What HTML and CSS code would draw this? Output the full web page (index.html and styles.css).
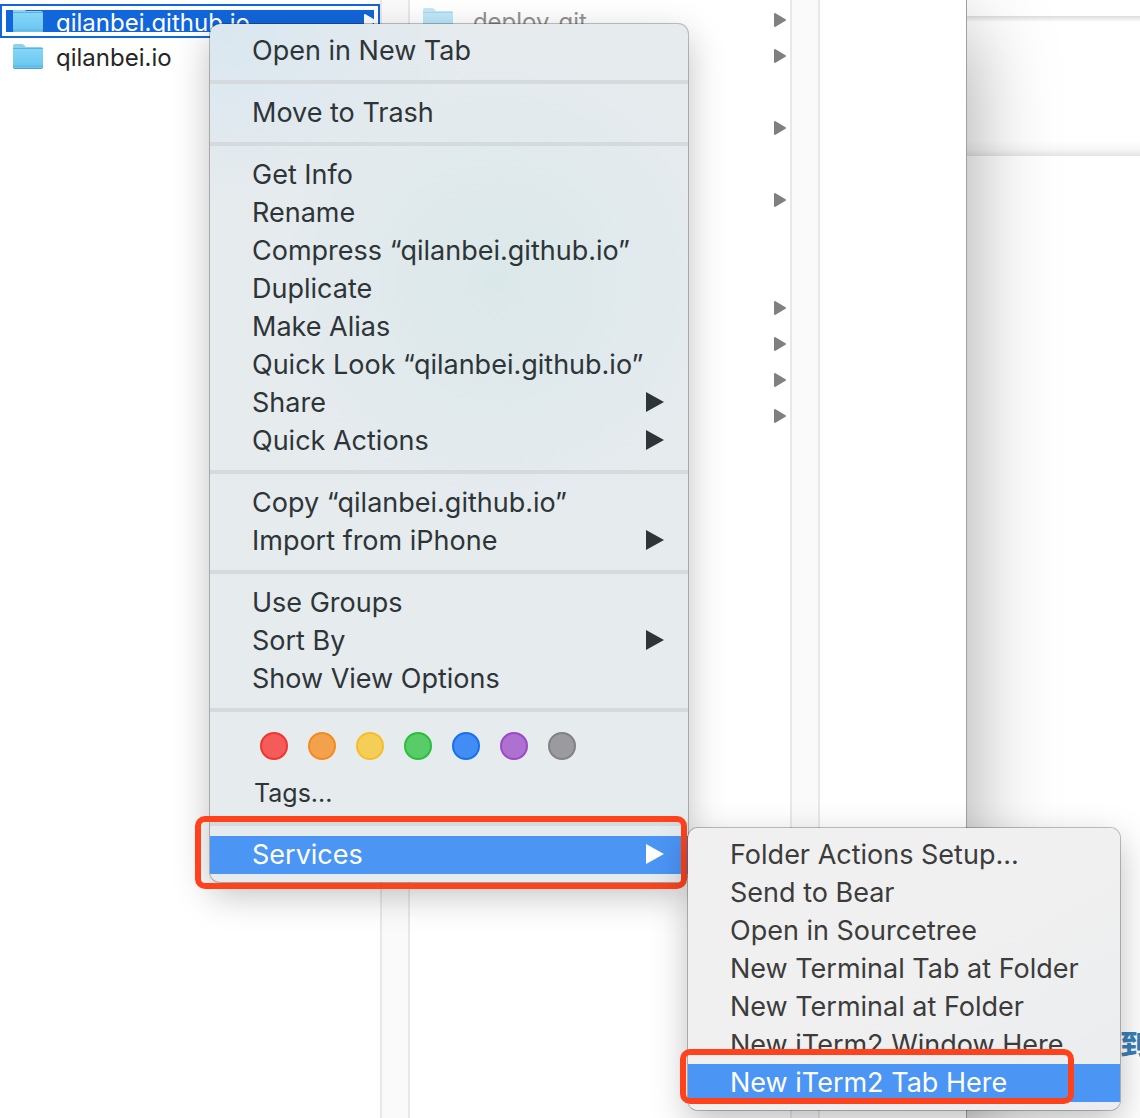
FILE: index.html
```html
<!DOCTYPE html>
<html lang="en">
<head>
<meta charset="utf-8">
<title>Finder</title>
<link rel="stylesheet" href="styles.css">
</head>
<body>
<svg class="defs" width="0" height="0" aria-hidden="true">
  <defs>
    <linearGradient id="front" x1="0" y1="0" x2="0" y2="1">
      <stop offset="0" stop-color="#85d6f8"/>
      <stop offset="1" stop-color="#69c5f0"/>
    </linearGradient>
    <symbol id="folder" viewBox="0 0 30 26">
      <path d="M0 2Q0 0 2 0H9Q10 0 11 1L13 3H28Q30 3 30 5V24H0Z" fill="#8fd0ea"/>
      <path d="M0 5H30V23Q30 25 28 25H2Q0 25 0 23Z" fill="#4ba5ca"/>
      <path d="M0 5H30V22Q30 24 28 24H2Q0 24 0 22Z" fill="url(#front)"/>
      <path d="M0 4.500H30M0 22H30" stroke="#5bb3dc"/>
    </symbol>
    <symbol id="disclosure" viewBox="0 0 12 14">
      <path d="M1 1V13L11 7Z" fill="currentColor" stroke="currentColor" stroke-width="2" stroke-linejoin="round"/>
    </symbol>
    <symbol id="submenu" viewBox="0 0 18 20">
      <path d="M0 0V20L18 10Z" fill="currentColor"/>
    </symbol>
  </defs>
</svg>

<main class="desktop">
  <section class="finder" aria-label="Finder columns">
    <div class="column">
      <button class="file file-selected">
        <span class="file-fill">
          <svg class="folder"><use href="#folder"/></svg>
          <span class="file-name">qilanbei.github.io</span>
          <svg class="disclosure"><use href="#disclosure"/></svg>
        </span>
      </button>
      <button class="file">
        <svg class="folder"><use href="#folder"/></svg>
        <span class="file-name">qilanbei.io</span>
      </button>
    </div>
    <div class="gutter"></div>
    <div class="column">
      <button class="file file-hidden">
        <svg class="folder"><use href="#folder"/></svg>
        <span class="file-name">.deploy_git</span>
        <svg class="disclosure"><use href="#disclosure"/></svg>
      </button>
      <div class="file"><svg class="disclosure"><use href="#disclosure"/></svg></div>
      <div class="file"></div>
      <div class="file"><svg class="disclosure"><use href="#disclosure"/></svg></div>
      <div class="file"></div>
      <div class="file"><svg class="disclosure"><use href="#disclosure"/></svg></div>
      <div class="file"></div>
      <div class="file"></div>
      <div class="file"><svg class="disclosure"><use href="#disclosure"/></svg></div>
      <div class="file"><svg class="disclosure"><use href="#disclosure"/></svg></div>
      <div class="file"><svg class="disclosure"><use href="#disclosure"/></svg></div>
      <div class="file"><svg class="disclosure"><use href="#disclosure"/></svg></div>
    </div>
    <div class="gutter"></div>
  </section>
  <section class="page" aria-label="Web page">
    <div class="page-bar"></div>
    <div class="page-panel"></div>
    <h2 class="page-heading">到</h2>
  </section>

  <div class="menu menu-context" role="menu">
    <button class="item" role="menuitem">Open in New Tab</button>
    <hr class="separator">
    <button class="item" role="menuitem">Move to Trash</button>
    <hr class="separator">
    <button class="item" role="menuitem">Get Info</button>
    <button class="item" role="menuitem">Rename</button>
    <button class="item" role="menuitem">Compress “qilanbei.github.io”</button>
    <button class="item" role="menuitem">Duplicate</button>
    <button class="item" role="menuitem">Make Alias</button>
    <button class="item" role="menuitem">Quick Look “qilanbei.github.io”</button>
    <button class="item" role="menuitem">Share<svg class="arrow"><use href="#submenu"/></svg></button>
    <button class="item" role="menuitem">Quick Actions<svg class="arrow"><use href="#submenu"/></svg></button>
    <hr class="separator">
    <button class="item" role="menuitem">Copy “qilanbei.github.io”</button>
    <button class="item" role="menuitem">Import from iPhone<svg class="arrow"><use href="#submenu"/></svg></button>
    <hr class="separator">
    <button class="item" role="menuitem">Use Groups</button>
    <button class="item" role="menuitem">Sort By<svg class="arrow"><use href="#submenu"/></svg></button>
    <button class="item" role="menuitem">Show View Options</button>
    <hr class="separator">
    <div class="tags">
      <button class="tag tag-red" aria-label="Red"></button>
      <button class="tag tag-orange" aria-label="Orange"></button>
      <button class="tag tag-yellow" aria-label="Yellow"></button>
      <button class="tag tag-green" aria-label="Green"></button>
      <button class="tag tag-blue" aria-label="Blue"></button>
      <button class="tag tag-purple" aria-label="Purple"></button>
      <button class="tag tag-gray" aria-label="Gray"></button>
    </div>
    <button class="item item-tags" role="menuitem">Tags...</button>
    <hr class="separator">
    <button class="item item-active marked-services" role="menuitem">Services<svg class="arrow"><use href="#submenu"/></svg></button>
  </div>

  <div class="menu menu-services" role="menu">
    <button class="item" role="menuitem">Folder Actions Setup...</button>
    <button class="item" role="menuitem">Send to Bear</button>
    <button class="item" role="menuitem">Open in Sourcetree</button>
    <button class="item" role="menuitem">New Terminal Tab at Folder</button>
    <button class="item" role="menuitem">New Terminal at Folder</button>
    <button class="item" role="menuitem">New iTerm2 Window Here</button>
    <button class="item item-active marked-tab" role="menuitem">New iTerm2 Tab Here</button>
  </div>
</main>
</body>
</html>
```
FILE: styles.css
```css
* {
  box-sizing: border-box;
}

body {
  margin: 0;
  background: #fff;
  font-family: Inter, "Liberation Sans", "Noto Sans CJK SC", sans-serif;
}

button {
  margin: 0;
  border: 0;
  padding: 0;
  background: none;
  color: inherit;
  font: inherit;
  text-align: left;
}

svg {
  display: block;
  flex: none;
}

.defs {
  position: absolute;
}

.desktop {
  position: relative;
  display: flex;
  min-height: 100vh;
  overflow: hidden;
}

/* Finder window */

.finder {
  position: relative;
  z-index: 1;
  display: flex;
  width: 967px;
  flex: none;
  border-right: 1px solid #a0a0a0;
  background: #fff;
  box-shadow: 0 30px 80px rgba(0, 0, 0, 0.36);
}

.column {
  width: 380px;
  padding-top: 2px;
}

.gutter {
  width: 30px;
  border: solid #e8e8e8;
  border-width: 0 2px;
  background: #fafafa;
}

.file {
  display: flex;
  align-items: center;
  width: 100%;
  height: 36px;
  padding: 0 4px 0 13px;
  color: #262626;
  font-size: 24px;
  line-height: 36px;
}

.file-name {
  padding-top: 3px;
}

.file-selected {
  height: 34px;
  margin-top: 2px;
  padding: 4px;
  border: 2px solid #1166dc;
  color: #fff;
}

.file-fill {
  display: flex;
  align-items: center;
  width: 100%;
  height: 22px;
  padding-left: 7px;
  overflow: hidden;
  background: #1166dc;
}

.folder {
  width: 30px;
  height: 26px;
  margin: 2px 13px 0 0;
}

.disclosure {
  width: 12px;
  height: 14px;
  margin-left: auto;
  color: #808080;
}

.file-selected .folder {
  margin-top: 0;
}

.file-selected .disclosure {
  margin-right: -2px;
  color: #fff;
}

.file-hidden .folder,
.file-hidden .file-name {
  opacity: 0.5;
}

/* Web page behind the Finder window */

.page {
  flex: 1;
  min-width: 0;
}

.page-bar {
  height: 16px;
}

.page-panel {
  height: 140px;
  background: linear-gradient(#dcdcdc, #fff 6px, #fff 124px, #f6f6f6 134px, #e4e4e4);
}

.page-heading {
  margin: 869px 0 0 153px;
  color: #3a7fb7;
  font-family: "Noto Sans CJK SC", sans-serif;
  font-size: 28px;
  font-weight: 900;
  line-height: 36px;
  white-space: nowrap;
}

/* Menus */

.menu {
  position: absolute;
  z-index: 2;
  padding: 8px 0;
  border-radius: 10px;
  box-shadow: 0 0 0 1px rgba(0, 0, 0, 0.24), 0 12px 36px rgba(0, 0, 0, 0.26);
  font-size: 27px;
}

.menu-context {
  top: 24px;
  left: 210px;
  width: 478px;
  background:
    radial-gradient(ellipse 240px 240px at 60% 30%, #dbe8ea, transparent),
    radial-gradient(ellipse 260px 180px at 0 0, #d9e7f0, transparent),
    #e6ebee;
  color: #2e3538;
}

.menu-services {
  top: 828px;
  left: 688px;
  width: 432px;
  background: linear-gradient(150deg, #f0f0f0 50%, #eaecef);
  color: #3c3c3c;
}

.item {
  position: relative;
  display: flex;
  align-items: center;
  justify-content: space-between;
  width: 100%;
  height: 38px;
  padding: 0 24px 0 42px;
  line-height: 38px;
  white-space: nowrap;
}

.item-active {
  background: #4b95f5;
  color: #fff;
}

.item-tags {
  padding-left: 44px;
  font-size: 25px;
}

.arrow {
  width: 18px;
  height: 20px;
  margin-bottom: 2px;
}

.separator {
  height: 4px;
  margin: 10px 0;
  border: 0;
  background: #d4dadd;
}

.tags {
  display: flex;
  gap: 20px;
  padding: 10px 50px 14px;
}

.tag {
  width: 28px;
  height: 28px;
  border: 2px solid;
  border-radius: 50%;
}

.tag-red { border-color: #f23430; background: #f55b59; }
.tag-orange { border-color: #f48b20; background: #f4a14d; }
.tag-yellow { border-color: #f4bf27; background: #f5cd59; }
.tag-green { border-color: #2abe3d; background: #58cc67; }
.tag-blue { border-color: #1770f0; background: #428df3; }
.tag-purple { border-color: #9a4bc5; background: #ae70d1; }
.tag-gray { border-color: #828286; background: #9b9a9f; }

/* Red call-outs drawn over the highlighted items */

.marked-services::after,
.marked-tab::after {
  content: "";
  position: absolute;
  border: 6px solid #ff421c;
  border-radius: 10px;
}

.marked-services::after {
  inset: -20px 1px -15px -15px;
}

.marked-tab::after {
  inset: -15px 46px -2px -8px;
}
```
